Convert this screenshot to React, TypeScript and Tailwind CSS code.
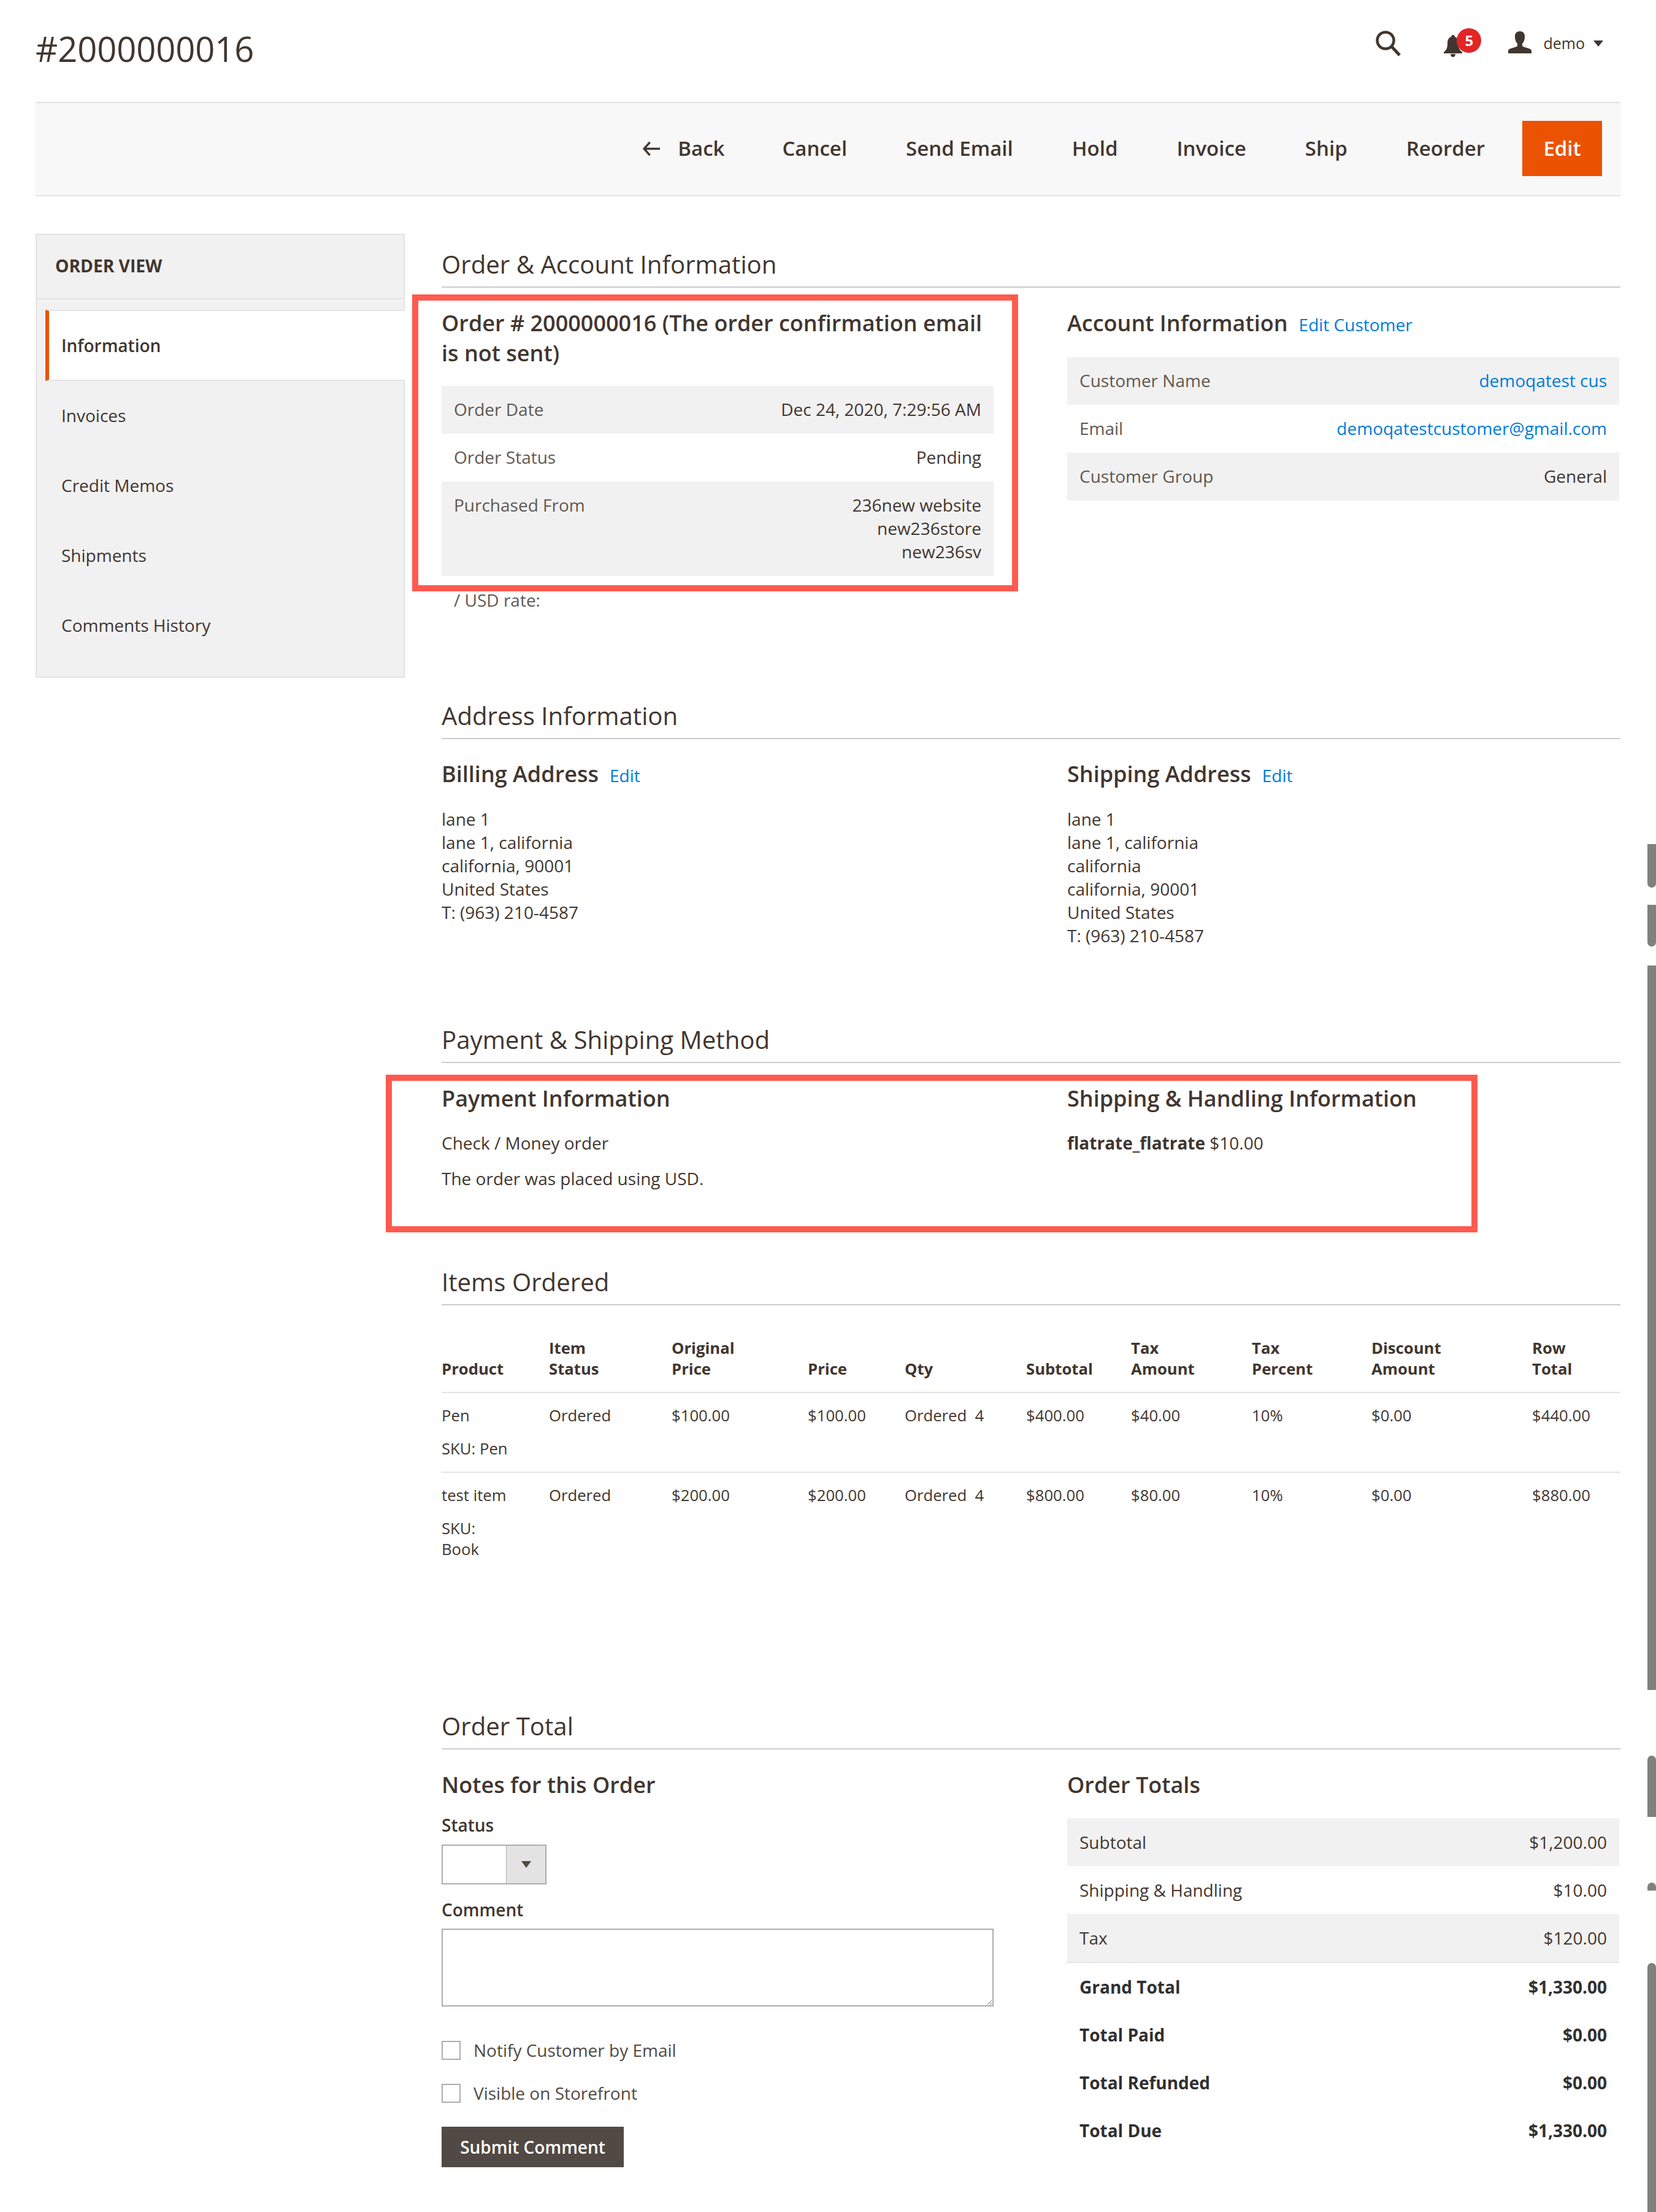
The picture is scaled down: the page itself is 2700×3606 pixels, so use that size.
import React from "react";

const labelCls = "text-[#615852]";
const linkCls = "text-[#007bdb]";

function SectionTitle({ children }: { children: React.ReactNode }) {
  return (
    <div className="h-[88px] border-b-2 border-[#cccccc] pt-[19px] text-[40.2px] leading-[62px] font-normal text-[#41362f]">
      {children}
    </div>
  );
}

function H3({ children }: { children: React.ReactNode }) {
  return <h3 className="text-[36px] leading-[48.5px] font-semibold text-[#41362f]">{children}</h3>;
}

function Row({ label, striped, children, className = "" }: { label: string; striped?: boolean; children: React.ReactNode; className?: string }) {
  return (
    <div className={`flex justify-between px-[20px] pt-[19px] pb-[21px] min-h-[78px] ${striped ? "bg-[#f1f1f1]" : ""} ${className}`}>
      <div className={labelCls}>{label}</div>
      <div className="text-right">{children}</div>
    </div>
  );
}

function TotalRow({ label, value, striped, bold, className = "" }: { label: string; value: string; striped?: boolean; bold?: boolean; className?: string }) {
  return (
    <div className={`flex justify-between items-center px-[20px] h-[78px] ${striped ? "bg-[#f1f1f1]" : ""} ${bold ? "font-bold text-[#303030]" : ""} ${className}`}>
      <div>{label}</div>
      <div>{value}</div>
    </div>
  );
}

const actions = ["Send Email", "Hold", "Invoice", "Ship", "Reorder"];

const headers = [
  ["Product"],
  ["Item", "Status"],
  ["Original", "Price"],
  ["Price"],
  ["Qty"],
  ["Subtotal"],
  ["Tax", "Amount"],
  ["Tax", "Percent"],
  ["Discount", "Amount"],
  ["Row", "Total"],
];

const gridCols = "grid grid-cols-[175px_200px_222px_158px_198px_171px_197px_195px_262px_144px]";

function ItemRow({ name, sku, v }: { name: string; sku: string[]; v: string[] }) {
  return (
    <div className={`${gridCols} border-b-2 border-[#e3e3e3] pt-[20px] pb-[20px] last:border-b-0 text-[25.7px] leading-[34px]`}>
      <div>
        <div>{name}</div>
        <div className="mt-[20px]">
          {sku.map((s) => (
            <div key={s}>{s}</div>
          ))}
        </div>
      </div>
      {v.map((x, i) => (
        <div key={i} className={i === 3 ? "whitespace-pre" : ""}>
          {x}
        </div>
      ))}
    </div>
  );
}

function Bar({ cls }: { cls: string }) {
  return <div className={`absolute right-0 w-[14px] bg-[#808080] ${cls}`} />;
}

export default function App() {
  return (
    <div className="relative w-[2700px] h-[3606px] overflow-hidden bg-white font-['Open_Sans',sans-serif] text-[28px] leading-[38px] text-[#41362f]">
      <div className="px-[58px]">
        {/* header */}
        <header className="flex h-[166px] items-start">
          <h1 className="mt-[40px] text-[56px] leading-[78px] font-normal text-[#41362f]">#2000000016</h1>
          <div className="ml-auto mt-[48px] flex items-start pr-[28px]">
            <svg viewBox="0 0 44 44" className="w-[44px] h-[44px]" fill="none" stroke="#41362f">
              <circle cx="16" cy="18" r="13.5" strokeWidth="4.5" />
              <path d="M26 28 L39 42" strokeWidth="5" />
            </svg>
            <div className="relative ml-[67px] mt-[6px] w-[30px] h-[36px]">
              <svg viewBox="0 0 30 36" className="absolute left-0 top-[3px] w-[30px] h-[36px]" fill="#41362f">
                <path d="M15 0c-2 0-3 1.5-3 3C7 5 6 9 6 14c0 6-1 10-6 14v2h30v-2c-5-4-6-8-6-14 0-5-1-9-6-11 0-1.500-1-3-3-3z" />
                <path d="M11 31h8c0 3-2 5-4 5s-4-2-4-5z" />
              </svg>
              <span className="absolute left-[21px] top-[-8px] flex h-[40px] w-[40px] items-center justify-center rounded-full bg-[#e22626] text-[24px] leading-none font-bold text-white">
                5
              </span>
            </div>
            <svg viewBox="0 0 38 36" className="ml-[75px] mt-[3px] w-[38px] h-[36px]" fill="#41362f">
              <path d="M19 0c-5 0-8 3-8 8 0 3 0 4 1 7 1 3 2 4 3 5v4c-2 2-9 3-13 5-1 .5-2 2-2 3v4h38v-4c0-1-1-2.500-2-3-4-2-11-3-13-5v-4c1-1 2-2 3-5 1-3 1-4 1-7 0-5-3-8-8-8z" />
            </svg>
            <span className="ml-[19px] text-[25px] leading-[44px]">demo</span>
            <span className="ml-[14px] mt-[18px] h-0 w-0 border-x-[8px] border-t-[10px] border-x-transparent border-t-[#41362f]" />
          </div>
        </header>

        {/* toolbar */}
        <div className="flex h-[154px] items-center justify-end border-y-2 border-[#e3e3e3] bg-[#f8f8f8] pr-[30px] pb-[2px] text-[33px] font-semibold">
          <div className="flex items-center">
            <svg viewBox="0 0 30 26" className="mr-[28px] w-[29px] h-[25px]" fill="none" stroke="#41362f" strokeWidth="3.600">
              <path d="M12 2 L2 13 L12 24 M2 13 H29" />
            </svg>
            <span>Back</span>
          </div>
          <span className="ml-[94px]">Cancel</span>
          {actions.map((a) => (
            <span key={a} className="ml-[96px]">
              {a}
            </span>
          ))}
          <span className="ml-[61px] flex h-[90px] w-[130px] items-center justify-center bg-[#eb5202] text-white">Edit</span>
        </div>

        <div className="flex pt-[61px]">
          {/* sidebar */}
          <aside className="h-[724px] w-[602px] shrink-0 border-2 border-[#e3e3e3] bg-[#f1f1f1]">
            <div className="flex h-[105px] items-center border-b-2 border-[#e3e3e3] pb-[4px] pl-[30px] text-[28.200px] font-bold uppercase text-[#41362f]">
              Order View
            </div>
            <nav className="mt-[17px] pl-[14px] text-[28px]">
              <div className="-mr-[2px] flex h-[116px] items-center border-y-2 border-l-[6px] border-y-[#e3e3e3] border-l-[#eb5202] bg-white pl-[20px] font-semibold">
                Information
              </div>
              {["Invoices", "Credit Memos", "Shipments", "Comments History"].map((n) => (
                <div key={n} className="flex h-[114px] items-center pl-[26px] pb-[2px]">
                  {n}
                </div>
              ))}
            </nav>
          </aside>

          {/* main */}
          <main className="ml-[60px] w-[1922px]">
            <section className="h-[736px]">
              <SectionTitle>Order &amp; Account Information</SectionTitle>
              <div className="grid grid-cols-[900px_900px] gap-x-[120px] pt-[34px]">
                <div>
                  <H3>
                    Order # 2000000016 (The order confirmation email
                    <br />
                    is not sent)
                  </H3>
                  <div className="mt-[29px]">
                    <Row label="Order Date" striped>
                      Dec 24, 2020, 7:29:56 AM
                    </Row>
                    <Row label="Order Status">Pending</Row>
                    <Row label="Purchased From" striped>
                      236new website
                      <br />
                      new236store
                      <br />
                      new236sv
                    </Row>
                  </div>
                  <div className={`mt-[20px] pl-[20px] ${labelCls}`}>/ USD rate:</div>
                </div>
                <div>
                  <div className="flex items-baseline">
                    <H3>Account Information</H3>
                    <span className={`ml-[18px] ${linkCls}`}>Edit Customer</span>
                  </div>
                  <div className="mt-[30px]">
                    <Row label="Customer Name" striped>
                      <span className={linkCls}>demoqatest cus</span>
                    </Row>
                    <Row label="Email">
                      <span className={linkCls}>demoqatestcustomer@gmail.com</span>
                    </Row>
                    <Row label="Customer Group" striped>
                      General
                    </Row>
                  </div>
                </div>
              </div>
            </section>

            <section className="h-[528px]">
              <SectionTitle>Address Information</SectionTitle>
              <div className="grid grid-cols-[900px_900px] gap-x-[120px] pt-[33px]">
                <div>
                  <div className="flex items-baseline">
                    <H3>Billing Address</H3>
                    <span className={`ml-[18px] ${linkCls}`}>Edit</span>
                  </div>
                  <div className="mt-[29px]">
                    lane 1<br />
                    lane 1, california
                    <br />
                    california, 90001
                    <br />
                    United States
                    <br />
                    T: (963) 210-4587
                  </div>
                </div>
                <div>
                  <div className="flex items-baseline">
                    <H3>Shipping Address</H3>
                    <span className={`ml-[18px] ${linkCls}`}>Edit</span>
                  </div>
                  <div className="mt-[29px]">
                    lane 1<br />
                    lane 1, california
                    <br />
                    california
                    <br />
                    california, 90001
                    <br />
                    United States
                    <br />
                    T: (963) 210-4587
                  </div>
                </div>
              </div>
            </section>

            <section className="h-[395px]">
              <SectionTitle>Payment &amp; Shipping Method</SectionTitle>
              <div className="grid grid-cols-[900px_900px] gap-x-[120px] pt-[34px]">
                <div>
                  <H3>Payment Information</H3>
                  <div className="mt-[28px]">Check / Money order</div>
                  <div className="mt-[20px]">The order was placed using USD.</div>
                </div>
                <div>
                  <H3>Shipping &amp; Handling Information</H3>
                  <div className="mt-[28px]">
                    <span className="font-bold">flatrate_flatrate</span> $10.00
                  </div>
                </div>
              </div>
            </section>

            <section className="h-[724px]">
              <SectionTitle>Items Ordered</SectionTitle>
              <div className="mt-[53px]">
                <div className={`${gridCols} items-end border-b-2 border-[#e3e3e3] pb-[20px] text-[25.7px] leading-[34px] font-bold`}>
                  {headers.map((h) => (
                    <div key={h.join()}>
                      {h.map((l) => (
                        <div key={l}>{l}</div>
                      ))}
                    </div>
                  ))}
                </div>
                <ItemRow
                  name="Pen"
                  sku={["SKU: Pen"]}
                  v={["Ordered", "$100.00", "$100.00", "Ordered  4", "$400.00", "$40.00", "10%", "$0.00", "$440.00"]}
                />
                <ItemRow
                  name="test item"
                  sku={["SKU:", "Book"]}
                  v={["Ordered", "$200.00", "$200.00", "Ordered  4", "$800.00", "$80.00", "10%", "$0.00", "$880.00"]}
                />
              </div>
            </section>

            <section>
              <SectionTitle>Order Total</SectionTitle>
              <div className="grid grid-cols-[900px_900px] gap-x-[120px] pt-[34px]">
                <div>
                  <H3>Notes for this Order</H3>
                  <div className="mt-[21px] font-semibold">Status</div>
                  <div className="mt-[13px] flex h-[65px] w-[171px] border-2 border-[#adadad] bg-white">
                    <div className="w-[103px]" />
                    <div className="flex flex-1 items-center justify-center border-l border-[#adadad] bg-[#e3e3e3]">
                      <span className="h-0 w-0 border-x-[8px] border-t-[11px] border-x-transparent border-t-[#514943]" />
                    </div>
                  </div>
                  <div className="mt-[22px] font-semibold">Comment</div>
                  <textarea className="mt-[12px] block h-[127px] w-[900px] border-2 border-[#adadad] bg-white" />
                  <div className="mt-[56px] flex h-[31px] items-center">
                    <span className="h-[31px] w-[31px] border-2 border-[#adadad] bg-white" />
                    <span className="ml-[21px] text-[#514943]">Notify Customer by Email</span>
                  </div>
                  <div className="mt-[39px] flex h-[31px] items-center">
                    <span className="h-[31px] w-[31px] border-2 border-[#adadad] bg-white" />
                    <span className="ml-[21px] text-[#514943]">Visible on Storefront</span>
                  </div>
                  <div className="mt-[39px] flex h-[66px] w-[297px] items-center justify-center bg-[#514943] font-semibold text-white">
                    Submit Comment
                  </div>
                </div>
                <div>
                  <H3>Order Totals</H3>
                  <div className="mt-[29px]">
                    <TotalRow label="Subtotal" value="$1,200.00" striped />
                    <TotalRow label="Shipping & Handling" value="$10.00" />
                    <TotalRow label="Tax" value="$120.00" striped className="border-b-2 border-[#e3e3e3] h-[80px]" />
                    <TotalRow label="Grand Total" value="$1,330.00" bold />
                    <TotalRow label="Total Paid" value="$0.00" bold />
                    <TotalRow label="Total Refunded" value="$0.00" bold />
                    <TotalRow label="Total Due" value="$1,330.00" bold />
                  </div>
                </div>
              </div>
            </section>
          </main>
        </div>
      </div>

      {/* highlight boxes drawn over the page */}
      <div className="absolute left-[672px] top-[480px] h-[484px] w-[988px] border-[10px] border-[#ff5a4f]" />
      <div className="absolute left-[629px] top-[1752px] h-[257px] w-[1780px] border-[10px] border-[#ff5a4f]" />

      {/* scrollbar fragments at the page edge */}
      <Bar cls="top-[1376px] h-[71px] rounded-b-[10px]" />
      <Bar cls="top-[1475px] h-[68px] rounded-b-[10px]" />
      <Bar cls="top-[1574px] h-[1181px]" />
      <Bar cls="top-[2862px] h-[100px] rounded-t-[10px]" />
      <Bar cls="top-[3069px] h-[13px] rounded-t-[10px]" />
      <Bar cls="top-[3200px] h-[406px] rounded-t-[10px]" />
    </div>
  );
}
